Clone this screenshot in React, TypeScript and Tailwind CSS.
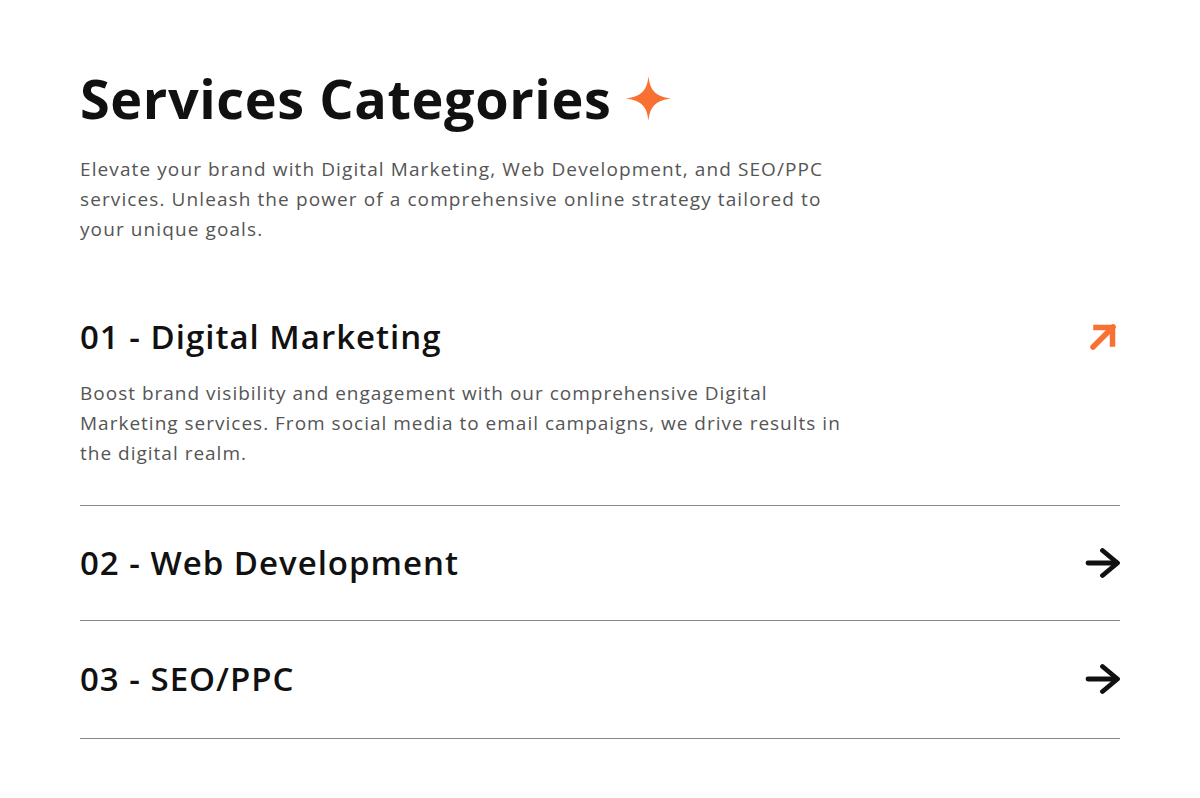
const services = [
  {
    title: "01 - Digital Marketing",
    text: "Boost brand visibility and engagement with our comprehensive Digital Marketing services. From social media to email campaigns, we drive results in the digital realm.",
    open: true,
  },
  { title: "02 - Web Development", text: "", open: false },
  { title: "03 - SEO/PPC", text: "", open: false },
];

function Sparkle() {
  return (
    <svg width="47" height="47" viewBox="0 0 48 48" className="shrink-0">
      <path
        d="M24 1 C25.5 15 30 21.5 47 24 C30 26.5 25.5 33 24 47 C22.5 33 18 26.5 1 24 C18 21.5 22.5 15 24 1 Z"
        fill="#f97132"
      />
    </svg>
  );
}

function ArrowUpRightBold() {
  return (
    <svg width="34" height="34" viewBox="0 0 34 34" fill="none" className="shrink-0">
      <path d="M7 27 L27 7" stroke="#f97132" strokeWidth="5.5" strokeLinecap="round" />
      <path d="M10 7.5 H26.5 V24" stroke="#f97132" strokeWidth="5.5" strokeLinecap="square" />
    </svg>
  );
}

function ArrowRightBold() {
  return (
    <svg width="38" height="36" viewBox="0 0 38 36" fill="none" className="shrink-0">
      <path d="M6 18 H35" stroke="#111" strokeWidth="4.8" strokeLinecap="round" />
      <path d="M20.5 5.5 L35.5 18 L20.5 30.5" stroke="#111" strokeWidth="4.8" strokeLinecap="round" strokeLinejoin="round" />
    </svg>
  );
}

export default function App() {
  return (
    <div
      className="min-h-[798px] bg-white px-20 pt-[66px] text-[#111]"
      style={{ fontFamily: "'Open Sans', 'Liberation Sans', sans-serif" }}
    >
      <div className="flex items-center gap-[14px]">
        <h1 className="text-[54px] font-bold leading-[64px] tracking-[0.6px]">Services Categories</h1>
        <Sparkle />
      </div>
      <p className="mt-[24px] max-w-[780px] text-[19px] leading-[30px] tracking-[1.1px] text-[#555]">
        Elevate your brand with Digital Marketing, Web Development, and SEO/PPC services. Unleash the power of a
        comprehensive online strategy tailored to your unique goals.
      </p>
      <div className="mt-[75px]">
        {services.map((s, i) => (
          <div
            key={s.title}
            className={`border-b border-[#888] ${s.open ? "pb-[37px]" : i === 2 ? "pt-[40px] pb-[41px]" : "py-[39px]"}`}
          >
            <div className="flex items-center justify-between">
              <h2 className="text-[33px] font-semibold leading-[36px] tracking-[1px]">{s.title}</h2>
              {s.open ? <ArrowUpRightBold /> : <ArrowRightBold />}
            </div>
            {s.open && (
              <p className="mt-[23px] max-w-[780px] text-[19px] leading-[30px] tracking-[1px] text-[#555]">{s.text}</p>
            )}
          </div>
        ))}
      </div>
    </div>
  );
}
